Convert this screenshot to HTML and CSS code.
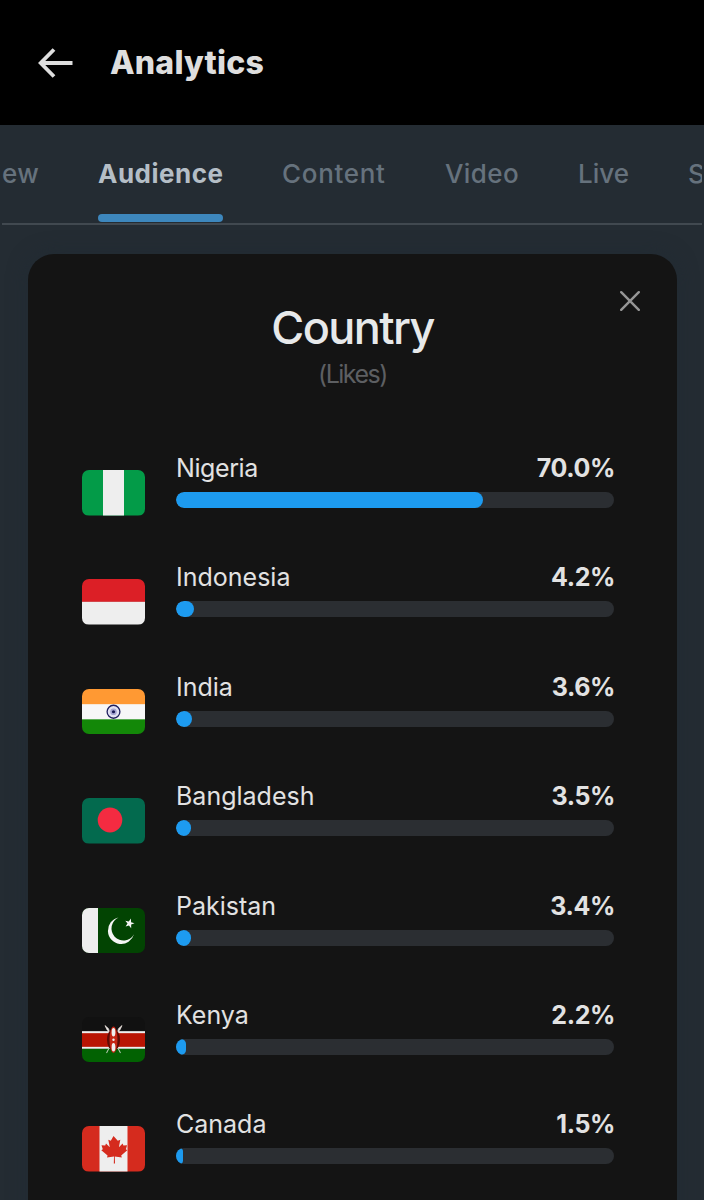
FILE: index.html
```html
<!DOCTYPE html>
<html lang="en">
<head>
  <meta charset="UTF-8" />
  <title>Analytics</title>
  <link rel="stylesheet" href="styles.css">
</head>
<body>
  <header class="topbar">
    <svg class="back" viewBox="0 0 36 30" fill="none" stroke="#dedede" stroke-width="3.8">
      <path d="M35.500 15H4.500M17 1.500L3.700 15 17 28.500" />
    </svg>
    <h1>Analytics</h1>
  </header>

  <nav class="tabs">
    <a class="tab overview">ew</a>
    <a class="tab active">Audience</a>
    <a class="tab content">Content</a>
    <a class="tab video">Video</a>
    <a class="tab live">Live</a>
    <a class="tab">S</a>
  </nav>

  <main class="card">
    <svg class="close" viewBox="0 0 20 20" fill="none" stroke="#969696" stroke-width="2.4" stroke-linecap="round">
      <path d="M1.2 1.2l17.6 17.6M18.8 1.2L1.2 18.8" />
    </svg>
    <h2>Country</h2>
    <p class="sub">(Likes)</p>

    <div class="list">
      <div class="row">
        <svg class="flag" viewBox="0 0 63 45" preserveAspectRatio="none">
          <rect width="63" height="45" fill="#039b48" />
          <rect x="21" width="21" height="45" fill="#eee" />
        </svg>
        <div class="stat">
          <div class="label"><span class="n1">Nigeria</span><b>70.0%</b></div>
          <div class="bar"><div class="fill" style="width: 70%"></div></div>
        </div>
      </div>

      <div class="row">
        <svg class="flag" viewBox="0 0 63 45" preserveAspectRatio="none">
          <rect y="22" width="63" height="23" fill="#eee" />
          <rect width="63" height="22.5" fill="#dc1f26" />
        </svg>
        <div class="stat">
          <div class="label"><span>Indonesia</span><b>4.2%</b></div>
          <div class="bar"><div class="fill" style="width: 4.2%"></div></div>
        </div>
      </div>

      <div class="row">
        <svg class="flag" viewBox="0 0 63 45" preserveAspectRatio="none">
          <rect y="14" width="63" height="17" fill="#f7f7f7" />
          <rect width="63" height="15" fill="#ff9933" />
          <rect y="30" width="63" height="15" fill="#138808" />
          <circle cx="31.5" cy="22.5" r="6.4" fill="#e1e1f2" stroke="#20205f" stroke-width="1.3" />
          <circle cx="31.5" cy="22.5" r="3.3" fill="#a5a5d3" />
          <circle cx="31.5" cy="22.5" r="1.6" fill="#181855" />
        </svg>
        <div class="stat">
          <div class="label"><span>India</span><b>3.6%</b></div>
          <div class="bar"><div class="fill" style="width: 3.6%"></div></div>
        </div>
      </div>

      <div class="row">
        <svg class="flag" viewBox="0 0 63 45" preserveAspectRatio="none">
          <rect width="63" height="45" fill="#036a4e" />
          <circle cx="28" cy="21.7" r="12.3" fill="#f42b41" />
        </svg>
        <div class="stat">
          <div class="label"><span>Bangladesh</span><b>3.5%</b></div>
          <div class="bar"><div class="fill" style="width: 3.5%"></div></div>
        </div>
      </div>

      <div class="row">
        <svg class="flag" viewBox="0 0 63 45" preserveAspectRatio="none">
          <rect width="63" height="45" fill="#024402" />
          <rect width="16" height="45" fill="#eee" />
          <path d="M36.500 9.300A13.300 13.300 0 1 0 52 26A12 12 0 1 1 36.500 9.300z" fill="#f5f5f5" />
          <path d="M0-5L1.200-1.600 4.800-1.500 1.900.6 2.900 4 0 2-2.900 4-1.900.6-4.800-1.500-1.200-1.600z" transform="translate(47.500 15.300) rotate(16)" fill="#f5f5f5" />
        </svg>
        <div class="stat">
          <div class="label"><span>Pakistan</span><b>3.4%</b></div>
          <div class="bar"><div class="fill" style="width: 3.4%"></div></div>
        </div>
      </div>

      <div class="row">
        <svg class="flag" viewBox="0 0 63 45" preserveAspectRatio="none">
          <rect width="63" height="15" fill="#111" />
          <rect y="14" width="63" height="17.5" fill="#eee" />
          <rect y="16" width="63" height="13.5" fill="#b91403" />
          <rect y="31.5" width="63" height="13.5" fill="#026202" />
          <path d="M23 8.500l2 4 2.500 2.500-1-3.500zM40 8.500l-2 4-2.500 2.500 1-3.500z" fill="#eee" stroke="#e4d9d5" stroke-width=".8" />
          <path d="M27 31l-2.500 4.500M36 31l2.500 4.500" stroke="#b8c8b3" />
          <ellipse cx="31.5" cy="22.500" rx="6.500" ry="11" fill="#5c0b05" />
          <ellipse cx="31.5" cy="22.500" rx="4" ry="13" fill="#c52514" />
          <ellipse cx="31.5" cy="15" rx="1.900" ry="4.200" fill="#eee" />
          <ellipse cx="31.5" cy="30" rx="1.900" ry="4.200" fill="#eee" />
          <circle cx="31.5" cy="22.500" r="1.200" fill="#eee" />
        </svg>
        <div class="stat">
          <div class="label"><span>Kenya</span><b>2.2%</b></div>
          <div class="bar"><div class="fill" style="width: 2.2%"></div></div>
        </div>
      </div>

      <div class="row">
        <svg class="flag" viewBox="0 0 63 45" preserveAspectRatio="none">
          <rect width="63" height="45" fill="#d52b1e" />
          <rect x="17.5" width="28" height="45" fill="#eee" />
          <path d="M31.500 10l-2.700 4.700-2.500-1 1.500 7.300-3.800-3.600-.8 2-3.700-.4 1.300 4.100-1.500 1 6.300 5-.6 2.100 7-1-.2 6.800h1.200l-.2-6.800 7 1-.6-2.100 6.100-5-1.400-1 1.200-4.100-3.700.4-.8-2-3.700 3.600 1.400-7.300-2.500 1z" fill="#d52b1e" />
        </svg>
        <div class="stat">
          <div class="label"><span>Canada</span><b>1.5%</b></div>
          <div class="bar"><div class="fill" style="width: 1.5%"></div></div>
        </div>
      </div>
    </div>
  </main>
</body>
</html>
```
FILE: styles.css
```css
* {
  box-sizing: border-box;
}
body {
  margin: 0;
  height: 1200px;
  overflow: hidden;
  background-color: #242c33;
  font-family: Inter, "Liberation Sans", sans-serif;
}
.topbar {
  display: flex;
  align-items: center;
  height: 125px;
  padding-left: 37px;
  background-color: #000;
}
.back {
  width: 36px;
  height: 30px;
}
h1 {
  margin: 0 0 0 37px;
  font-size: 32px;
  line-height: 40px;
  font-weight: 800;
  letter-spacing: 0.2px;
  color: #dedede;
}
.tabs {
  display: flex;
  gap: 59px;
  height: 100px;
  margin: 0 2px;
  overflow: hidden;
  border-bottom: 2px solid #414950;
}
.tab {
  flex: none;
  height: 98px;
  padding-top: 33px;
  font-size: 26px;
  line-height: 32px;
  font-weight: 500;
  color: #66727d;
}
.overview {
  width: 37px;
  letter-spacing: 0.4px;
}
.active {
  width: 125px;
  font-weight: 700;
  letter-spacing: 0.5px;
  color: #b4bec6;
}
.active::after {
  content: "";
  display: block;
  height: 8px;
  margin-top: 24px;
  border-radius: 4px;
  background-color: #3d87bd;
}
.content {
  width: 104px;
  letter-spacing: 0.7px;
}
.video {
  width: 74px;
  letter-spacing: 0.4px;
}
.live {
  width: 51px;
}
.card {
  position: relative;
  height: 1000px;
  margin: 29px 27.5px 0 27.5px;
  padding: 48px 62.5px 0 54.5px;
  border-radius: 26px;
  background-color: #141414;
  box-shadow: 0 0 20px rgba(32, 42, 51, 0.8);
}
.close {
  position: absolute;
  top: 37px;
  right: 37px;
  width: 20px;
  height: 20px;
}
h2 {
  margin: 0 -9px 0 0;
  font-size: 45px;
  line-height: 52px;
  font-weight: 500;
  letter-spacing: -1.6px;
  text-align: center;
  color: #e7e9ea;
}
.sub {
  margin: 4px -9px 0 0;
  font-size: 25px;
  line-height: 32px;
  letter-spacing: -1.5px;
  text-align: center;
  color: #5d5f62;
}
.list {
  display: grid;
  grid-auto-rows: 109.4px;
  margin-top: 62px;
}
.row {
  display: flex;
  gap: 31px;
}
.flag {
  width: 63px;
  height: 45.5px;
  margin-top: 18px;
  border-radius: 7px;
}
.stat {
  flex: 1;
}
.label {
  display: flex;
  justify-content: space-between;
  font-size: 25px;
  line-height: 32px;
  color: #e2e2e2;
}
.n1 {
  letter-spacing: -0.4px;
}
.label b {
  margin-right: -1px;
  font-weight: 700;
  letter-spacing: -0.4px;
}
.bar {
  height: 16px;
  margin-top: 8px;
  border-radius: 8px;
  overflow: hidden;
  background-color: #2b2e32;
}
.fill {
  height: 16px;
  border-radius: 8px;
  background-color: #1d9bf0;
}
```
